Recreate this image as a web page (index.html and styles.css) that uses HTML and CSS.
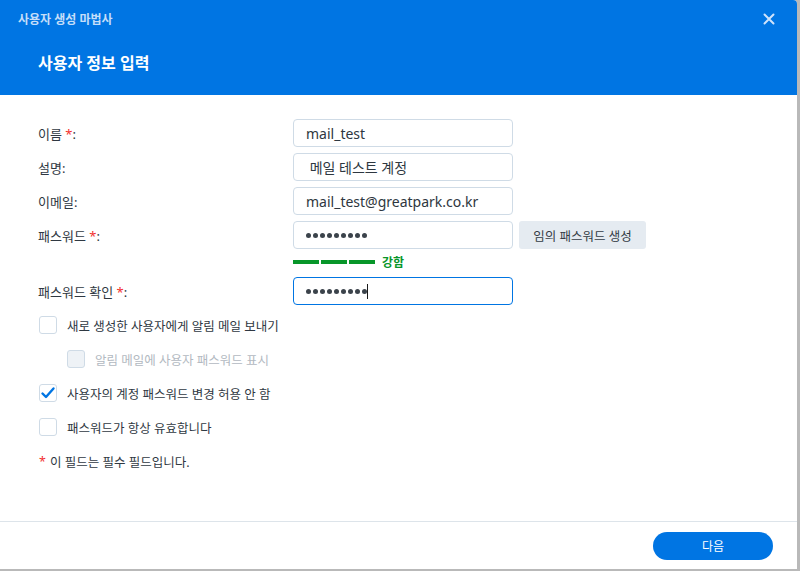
FILE: index.html
```html
<!DOCTYPE html>
<html lang="ko">
<head>
    <meta charset="utf-8">
    <title>사용자 생성 마법사</title>
    <link rel="stylesheet" href="styles.css">
</head>
<body>
<div class="dialog">
    <div class="header">
        <div class="titlebar">
            <span class="title">사용자 생성 마법사</span>
            <svg class="close" width="12" height="12" viewBox="0 0 12 12">
                <path d="M1.5 1.5 L10.5 10.5 M10.5 1.5 L1.5 10.5" stroke="#cfe3fb" stroke-width="2" stroke-linecap="round"/>
            </svg>
        </div>
        <h1 class="step">사용자 정보 입력</h1>
    </div>

    <div class="content">
        <div class="row">
            <label class="label">이름 <span class="req">*</span>:</label>
            <div class="input">mail_test</div>
        </div>
        <div class="row">
            <label class="label">설명:</label>
            <div class="input">&nbsp;메일 테스트 계정</div>
        </div>
        <div class="row">
            <label class="label">이메일:</label>
            <div class="input">mail_test@greatpark.co.kr</div>
        </div>
        <div class="row">
            <label class="label">패스워드 <span class="req">*</span>:</label>
            <div class="input">
                <span class="dots"><i></i><i></i><i></i><i></i><i></i><i></i><i></i><i></i><i></i></span>
            </div>
            <button class="btn-gen">임의 패스워드 생성</button>
        </div>
        <div class="strength">
            <span class="bar"></span><span class="bar"></span><span class="bar"></span>
            <span class="strength-text">강함</span>
        </div>
        <div class="row">
            <label class="label">패스워드 확인 <span class="req">*</span>:</label>
            <div class="input focus">
                <span class="dots"><i></i><i></i><i></i><i></i><i></i><i></i><i></i><i></i><i></i></span><span class="caret"></span>
            </div>
        </div>

        <div class="checks">
            <div class="check">
                <span class="box"></span>
                <span>새로 생성한 사용자에게 알림 메일 보내기</span>
            </div>
            <div class="check sub disabled">
                <span class="box"></span>
                <span>알림 메일에 사용자 패스워드 표시</span>
            </div>
            <div class="check">
                <span class="box">
                    <svg width="16" height="16" viewBox="0 0 16 16">
                        <path d="M2.5 8.5 L6 12 L13.5 3.5" fill="none" stroke="#0075e3" stroke-width="2.4" stroke-linecap="round" stroke-linejoin="round"/>
                    </svg>
                </span>
                <span>사용자의 계정 패스워드 변경 허용 안 함</span>
            </div>
            <div class="check">
                <span class="box"></span>
                <span>패스워드가 항상 유효합니다</span>
            </div>
            <div class="note"><span class="req">*</span> 이 필드는 필수 필드입니다.</div>
        </div>
    </div>

    <div class="footer">
        <button class="btn-next">다음</button>
    </div>
</div>
</body>
</html>
```

FILE: styles.css
```css
html, body {
    margin: 0;
    height: 100%;
}
body {
    background: #b9b9b9;
    font-family: "Noto Sans", "Noto Sans CJK KR", sans-serif;
    font-size: 13px;
    color: #2f3842;
}
.dialog {
    width: 797px;
    height: 569px;
    background: #fff;
    border-top-right-radius: 4px;
    display: flex;
    flex-direction: column;
    overflow: hidden;
}

/* header */
.header {
    background: #0075e3;
    height: 95px;
    box-sizing: border-box;
}
.titlebar {
    height: 38px;
    display: flex;
    align-items: center;
    justify-content: space-between;
    padding: 0 22px 0 18px;
}
.title {
    font-size: 12px;
    font-weight: bold;
    color: #c5def9;
}
.step {
    margin: 14px 0 0 38px;
    font-size: 16px;
    font-weight: bold;
    color: #fff;
    line-height: 22px;
}

/* form */
.content {
    flex: 1;
    padding: 24px 38px 0 38px;
}
.row {
    display: flex;
    align-items: center;
    height: 28px;
    margin-bottom: 6px;
}
.label {
    width: 255px;
    flex: none;
}
.req {
    color: #f23030;
}
.input {
    width: 220px;
    height: 28px;
    box-sizing: border-box;
    border: 1px solid #cfdbe6;
    border-radius: 4px;
    padding: 0 12px;
    display: flex;
    align-items: center;
    color: #2e3740;
    font-size: 14px;
}
.input.focus {
    border-color: #0075e3;
}
.dots {
    display: flex;
    gap: 2px;
}
.dots i {
    width: 5px;
    height: 5px;
    border-radius: 50%;
    background: #3b434b;
}
.caret {
    display: inline-block;
    width: 1px;
    height: 15px;
    background: #1a1a1a;
    margin-left: 0;
}
.btn-gen {
    margin-left: 6px;
    height: 28px;
    width: 127px;
    border: 0;
    border-radius: 3px;
    background: #e5ebf1;
    color: #333c45;
    font-family: inherit;
    font-size: 12.5px;
}
.strength {
    display: flex;
    align-items: center;
    gap: 2px;
    margin: 6px 0 8px 255px;
    height: 14px;
}
.bar {
    width: 26px;
    height: 4px;
    background: #079629;
}
.strength-text {
    margin-left: 5px;
    color: #079629;
    font-size: 12px;
    font-weight: bold;
}

/* checkboxes */
.checks {
    margin-top: -3px;
}
.check {
    display: flex;
    align-items: center;
    gap: 10px;
    height: 34px;
    padding-left: 1px;
    font-size: 12.5px;
}
.check.sub {
    padding-left: 29px;
}
.check.disabled {
    color: #b2b9c1;
}
.box {
    width: 18px;
    height: 18px;
    box-sizing: border-box;
    border: 1px solid #cfdbe6;
    border-radius: 3px;
    background: #fff;
    display: flex;
    align-items: center;
    justify-content: center;
}
.disabled .box {
    background: #eef2f6;
}
.note {
    height: 34px;
    display: flex;
    align-items: center;
    padding-left: 1px;
    font-size: 12.5px;
    gap: 4px;
}

/* footer */
.footer {
    border-top: 1px solid #dde4ea;
    height: 47px;
    display: flex;
    align-items: center;
    justify-content: flex-end;
    padding-right: 24px;
}
.btn-next {
    width: 120px;
    height: 28px;
    border: 0;
    border-radius: 14px;
    background: #0075e3;
    color: #fff;
    font-family: inherit;
    font-size: 12px;
}
```
